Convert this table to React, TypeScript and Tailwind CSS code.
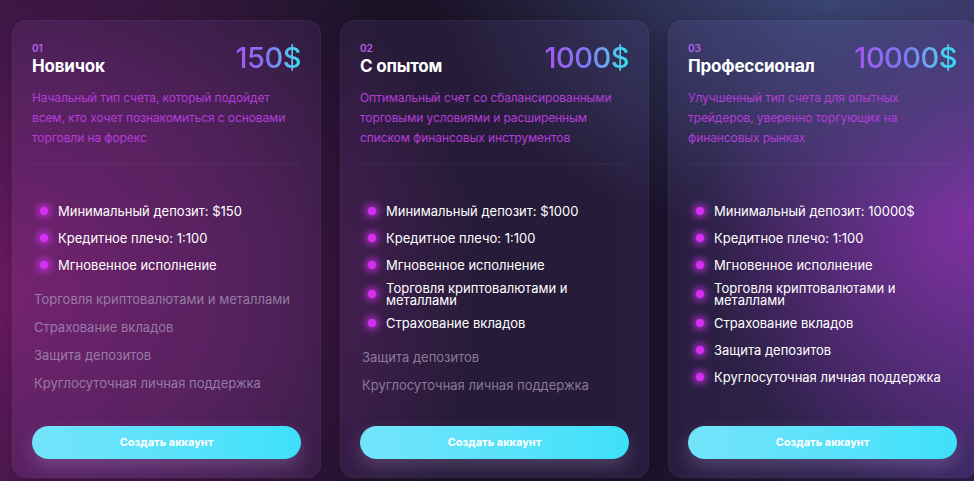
import React from "react";

type Plan = {
  num: string;
  title: string;
  price: string;
  desc: string;
  included: string[];
  excluded: string[];
};

const plans: Plan[] = [
  {
    num: "01",
    title: "Новичок",
    price: "150$",
    desc: "Начальный тип счета, который подойдет всем, кто хочет познакомиться с основами торговли на форекс",
    included: ["Минимальный депозит: $150", "Кредитное плечо: 1:100", "Мгновенное исполнение"],
    excluded: [
      "Торговля криптовалютами и металлами",
      "Страхование вкладов",
      "Защита депозитов",
      "Круглосуточная личная поддержка",
    ],
  },
  {
    num: "02",
    title: "С опытом",
    price: "1000$",
    desc: "Оптимальный счет со сбалансированными торговыми условиями и расширенным списком финансовых инструментов",
    included: [
      "Минимальный депозит: $1000",
      "Кредитное плечо: 1:100",
      "Мгновенное исполнение",
      "Торговля криптовалютами и металлами",
      "Страхование вкладов",
    ],
    excluded: ["Защита депозитов", "Круглосуточная личная поддержка"],
  },
  {
    num: "03",
    title: "Профессионал",
    price: "10000$",
    desc: "Улучшенный тип счета для опытных трейдеров, уверенно торгующих на финансовых рынках",
    included: [
      "Минимальный депозит: 10000$",
      "Кредитное плечо: 1:100",
      "Мгновенное исполнение",
      "Торговля криптовалютами и металлами",
      "Страхование вкладов",
      "Защита депозитов",
      "Круглосуточная личная поддержка",
    ],
    excluded: [],
  },
];

function PlanCard({ plan }: { plan: Plan }) {
  return (
    <div className="flex h-[458px] w-[309px] shrink-0 flex-col rounded-[14px] border border-white/[0.04] bg-[#b080ff]/[0.07] px-[19px] pt-[20px] pb-[18px] shadow-[0_10px_30px_rgba(10,5,20,0.35)]">
      <div className="flex items-start justify-between">
        <div>
          <div className="text-[10px] font-semibold leading-[14px] text-[#b560ea]">{plan.num}</div>
          <div className="text-[17px] font-bold leading-[22px] tracking-[-0.2px] text-white">{plan.title}</div>
        </div>
        <div className="bg-gradient-to-r from-[#a653f2] via-[#7a78f2] to-[#22e2f0] bg-clip-text text-[29px] font-medium leading-[34px] tracking-[-0.5px] text-transparent">
          {plan.price}
        </div>
      </div>
      <p className="mt-[11px] text-[12px] leading-[20px] tracking-[-0.1px] text-[#b43dd8]">{plan.desc}</p>
      <div className="mt-[15px] h-px bg-white/[0.05]" />

      <ul className="mt-[37px] flex flex-col gap-[7px] pl-[8px]">
        {plan.included.map((item) => (
          <li key={item} className="flex min-h-[20px] items-center gap-[10px]">
            <span className="h-2 w-2 shrink-0 rounded-full bg-[#d52ff2] shadow-[0_0_7px_3px_rgba(214,50,242,0.7)]" />
            <span className="text-[13px] leading-[12px] text-white">{item}</span>
          </li>
        ))}
      </ul>
      {plan.excluded.length > 0 && (
        <ul className="mt-[14px] flex flex-col gap-[8px] pl-[2px]">
          {plan.excluded.map((item) => (
            <li key={item} className="text-[13px] leading-[20px] text-[#a593b5]/80">
              {item}
            </li>
          ))}
        </ul>
      )}

      <button className="mt-auto h-[33px] w-full rounded-full bg-gradient-to-r from-[#72e4fa] to-[#3de0fb] text-[11px] font-bold text-white shadow-[0_8px_18px_rgba(210,190,255,0.22)]">
        Создать аккаунт
      </button>
    </div>
  );
}

export default function App() {
  return (
    <div
      className="relative h-[481px] w-[974px] overflow-hidden bg-[#1c1429] bg-[radial-gradient(ellipse_50%_90%_at_0%_60%,#721c66_0%,#4e1a52_50%,transparent_100%),radial-gradient(ellipse_40%_50%_at_85%_0%,#3a4672_0%,transparent_100%),radial-gradient(ellipse_28%_60%_at_100%_45%,#7d2c9c_0%,transparent_100%),linear-gradient(90deg,transparent_60%,#2e2250_100%)]"
      style={{ fontFamily: "Inter, 'Noto Sans', sans-serif" }}
    >
      <div className="flex gap-[19px] pl-[12px] pt-[20px]">
        {plans.map((p) => (
          <PlanCard key={p.num} plan={p} />
        ))}
      </div>
    </div>
  );
}
